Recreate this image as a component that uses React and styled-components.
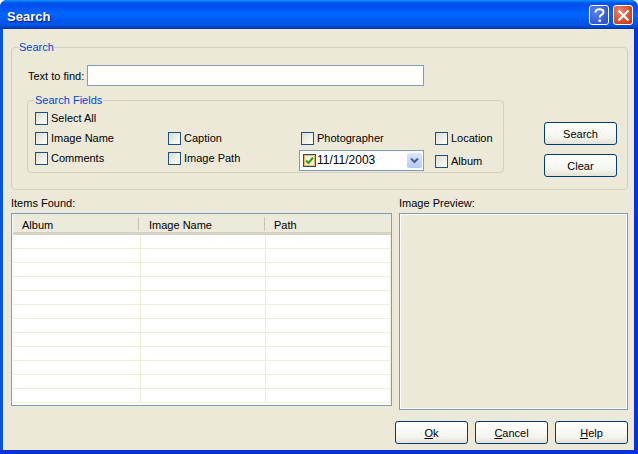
import React from "react";
import styled, { createGlobalStyle } from "styled-components";

const Global = createGlobalStyle`
html, body {
    margin: 0;
    padding: 0;
    background: #fff;
}
* {
    box-sizing: border-box;
}
`;

const Window = styled.div`
width: 638px;
height: 454px;
display: flex;
flex-direction: column;
overflow: hidden;
border-radius: 7px 7px 0 0;
background: #0831d9;
font-family: "Liberation Sans", Tahoma, sans-serif;
font-size: 11px;
color: #000;
`;

const TitleBar = styled.div`
height: 29px;
flex: none;
display: flex;
align-items: center;
padding: 1px 5px 0 7px;
background: linear-gradient(180deg, #0997ff 0%, #0053ee 10%, #0050ee 20%, #0066ff 50%, #0058f0 70%, #0055e5 85%, #0040c8 95%, #0032b0 100%);
`;

const TitleText = styled.div`
flex: 1;
padding-top: 2px;
color: #fff;
font-size: 13px;
font-weight: bold;
text-shadow: 1px 1px 1px #0f1089;
`;

const CaptionButton = styled.div`
width: 20px;
height: 20px;
margin-left: 4px;
border: 1px solid #fff;
border-radius: 3px;
display: flex;
align-items: center;
justify-content: center;
background: ${(p) => p.$close
    ? "radial-gradient(circle at 35% 30%, #e8866c 0%, #d9512f 55%, #b8330f 100%)"
    : "radial-gradient(circle at 35% 30%, #5a86e8 0%, #3a62d8 55%, #2a45b8 100%)"};
`;

const Client = styled.div`
flex: 1;
margin: 0 4px 4px 3px;
padding: 12px 6px 6px 8px;
background: #ece9d8;
display: flex;
flex-direction: column;
box-shadow: -3px 0 0 #0855dd, 4px 0 0 #0831d9;
`;

const Group = styled.fieldset`
margin: 0;
padding: 0;
border: 1px solid #d0d0bf;
border-radius: 4px;
min-width: 0;
`;

const Legend = styled.legend`
margin-left: ${(p) => p.$offset}px;
padding: 0 1px;
color: #0046d5;
font-size: 11px;
line-height: 13px;
`;

const SearchGroup = styled(Group)`
height: 149px;
display: flex;
padding: 0 10px 0 15px;
`;

const SearchBody = styled.div`
width: 477px;
display: flex;
flex-direction: column;
`;

const FindRow = styled.div`
display: flex;
align-items: center;
gap: 3px;
padding: 11px 0 0 1px;
`;

const TextInput = styled.div`
width: 337px;
height: 21px;
background: #fff;
border: 1px solid #7f9db9;
`;

const FieldsGroup = styled(Group)`
height: 79px;
margin-top: 8px;
padding: 1px 10px 0 7px;
display: grid;
grid-template-columns: 133px 133px 134px 1fr;
grid-template-rows: 20px 20px 24px;
align-items: center;
`;

const CheckLabel = styled.div`
display: flex;
align-items: center;
gap: 3px;
grid-column: ${(p) => p.$column};
grid-row: ${(p) => p.$row};
margin-top: ${(p) => p.$nudge > 0 ? p.$nudge * 2 : 0}px;
margin-bottom: ${(p) => p.$nudge < 0 ? p.$nudge * -2 : 0}px;
`;

const Box = styled.div`
width: 13px;
height: 13px;
flex: none;
border: 1px solid #1c5180;
background: linear-gradient(135deg, #dcdcd7 0%, #f4f4f0 70%, #fff 100%);
`;

const DatePicker = styled.div`
grid-column: 3;
grid-row: 3;
width: 125px;
height: 21px;
margin-left: -2px;
background: #fff;
border: 1px solid #7f9db9;
display: flex;
align-items: center;
padding: 0 1px 0 3px;
gap: 1px;
font-size: 12px;
`;

const DateCheck = styled.div`
width: 13px;
height: 13px;
flex: none;
border: 1px solid #1c5180;
box-shadow: inset 0 0 0 1px #f5b84a;
background: #fdf3dc;
display: flex;
align-items: center;
justify-content: center;
`;

const DateValue = styled.div`
flex: 1;
`;

const DropArrow = styled.div`
width: 15px;
height: 15px;
border-radius: 2px;
background: linear-gradient(180deg, #dbe6ff 0%, #b5c9f7 100%);
display: flex;
align-items: center;
justify-content: center;
`;

const SideButtons = styled.div`
margin-left: 40px;
padding-top: 68px;
display: flex;
flex-direction: column;
gap: 9px;
`;

const Button = styled.div`
width: 73px;
height: 23px;
flex: none;
border: 1px solid #003c74;
border-radius: 3px;
display: flex;
align-items: center;
justify-content: center;
background: linear-gradient(180deg, #fff 0%, #f4f4ee 70%, #e4e2d6 100%);
font-size: 11px;
`;

const Underlined = styled.span`
text-decoration: underline;
`;

const LowerRow = styled.div`
display: flex;
gap: 7px;
margin-top: 7px;
`;

const ListColumn = styled.div`
width: 381px;
`;

const PreviewColumn = styled.div`
width: 229px;
`;

const Caption = styled.div`
height: 16px;
line-height: 13px;
`;

const ListFrame = styled.div`
height: 193px;
background: #fff;
border: 1px solid #7f9db9;
padding-left: 1px;
overflow: hidden;
`;

const HeaderRow = styled.div`
height: 21px;
display: grid;
grid-template-columns: 126px 126px 1fr;
background: #ebeadb;
border-bottom: 3px solid #d6d2c2;
`;

const HeaderCell = styled.div`
padding: 1px 0 0 ${(p) => p.$inset || 9}px;
display: flex;
align-items: center;
font-size: 11px;
height: 14px;
margin-top: 3px;
border-right: ${(p) => p.$last ? "none" : "1px solid #c7c5b2"};
`;

const ListRow = styled.div`
height: 14px;
display: grid;
grid-template-columns: 128px 125px 125px;
border-bottom: 1px solid #efedda;
`;

const ListCell = styled.div`
border-right: 1px solid #efedda;
`;

const PreviewPane = styled.div`
height: 197px;
background: #ece9d8;
border: 1px solid #7f9db9;
box-shadow: inset 1px 1px 0 #fff, inset -1px -1px 0 #fff;
`;

const Footer = styled.div`
display: flex;
justify-content: flex-end;
gap: 7px;
margin-top: 11px;
`;

const rows = Array.from({ length: 12 }, (_, i) => i);
const fields = [
    { label: "Image Name", column: 1, row: 2 },
    { label: "Caption", column: 2, row: 2 },
    { label: "Photographer", column: 3, row: 2 },
    { label: "Location", column: 4, row: 2 },
    { label: "Comments", column: 1, row: 3, nudge: -2 },
    { label: "Image Path", column: 2, row: 3, nudge: -2 },
    { label: "Album", column: 4, row: 3, nudge: 1 },
];

function App() {
    return (
        <Window>
            <Global />
            <TitleBar>
                <TitleText>Search</TitleText>
                <CaptionButton>
                    <svg width="11" height="15" viewBox="0 0 11 15">
                        <path d="M1.5 4.5C1.5 2.5 3 1.2 5.5 1.2S9.5 2.5 9.5 4.3C9.5 6.8 5.7 6.6 5.7 9.6" fill="none" stroke="#fff" strokeWidth="2" />
                        <rect x="4.5" y="11.5" width="2.4" height="2.4" fill="#fff" />
                    </svg>
                </CaptionButton>
                <CaptionButton $close>
                    <svg width="13" height="13" viewBox="0 0 13 13">
                        <path d="M1.5 1.5L11.5 11.5M11.5 1.5L1.5 11.5" fill="none" stroke="#fff" strokeWidth="2.2" />
                    </svg>
                </CaptionButton>
            </TitleBar>
            <Client>
                <SearchGroup>
                    <Legend $offset={-9}>Search</Legend>
                    <SearchBody>
                        <FindRow>
                            Text to find:
                            <TextInput />
                        </FindRow>
                        <FieldsGroup>
                            <Legend $offset={-1}>Search Fields</Legend>
                            <CheckLabel $column={1} $row={1}><Box />Select All</CheckLabel>
                            {fields.map((f) => (
                                <CheckLabel key={f.label} $column={f.column} $row={f.row} $nudge={f.nudge || 0}>
                                    <Box />{f.label}
                                </CheckLabel>
                            ))}
                            <DatePicker>
                                <DateCheck>
                                    <svg width="9" height="9" viewBox="0 0 9 9">
                                        <path d="M1 4.5L3.5 7L8 1.5" fill="none" stroke="#21a121" strokeWidth="2" />
                                    </svg>
                                </DateCheck>
                                <DateValue>11/11/2003</DateValue>
                                <DropArrow>
                                    <svg width="9" height="7" viewBox="0 0 9 7">
                                        <path d="M1 1.5L4.5 5L8 1.5" fill="none" stroke="#4d6185" strokeWidth="2" />
                                    </svg>
                                </DropArrow>
                            </DatePicker>
                        </FieldsGroup>
                    </SearchBody>
                    <SideButtons>
                        <Button>Search</Button>
                        <Button>Clear</Button>
                    </SideButtons>
                </SearchGroup>
                <LowerRow>
                    <ListColumn>
                        <Caption>Items Found:</Caption>
                        <ListFrame>
                            <HeaderRow>
                                <HeaderCell>Album</HeaderCell>
                                <HeaderCell $inset={10}>Image Name</HeaderCell>
                                <HeaderCell $last>Path</HeaderCell>
                            </HeaderRow>
                            {rows.map((r) => (
                                <ListRow key={r}>
                                    <ListCell />
                                    <ListCell />
                                    <ListCell />
                                </ListRow>
                            ))}
                        </ListFrame>
                    </ListColumn>
                    <PreviewColumn>
                        <Caption>Image Preview:</Caption>
                        <PreviewPane />
                    </PreviewColumn>
                </LowerRow>
                <Footer>
                    <Button><Underlined>O</Underlined>k</Button>
                    <Button><Underlined>C</Underlined>ancel</Button>
                    <Button><Underlined>H</Underlined>elp</Button>
                </Footer>
            </Client>
        </Window>
    );
}

export default App;
